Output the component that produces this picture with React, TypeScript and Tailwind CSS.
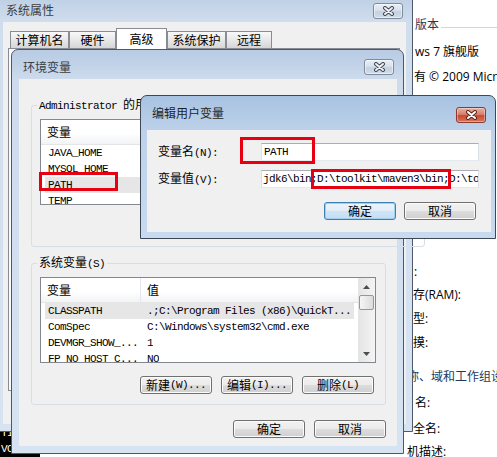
import React from 'react';

const cjk = "font-['Noto_Sans_CJK_SC',sans-serif]";
const mono = "font-['Liberation_Mono','Noto_Sans_CJK_SC',monospace] text-[11px] tracking-[-0.6px]";
const sys = "font-['Open_Sans','Noto_Sans_CJK_SC',sans-serif]";

const M: React.FC<{ children: React.ReactNode }> = ({ children }) => (
  <span className={mono}>{children}</span>
);

const CloseButton: React.FC<{ active?: boolean }> = ({ active = false }) => (
  <div
    className={
      active
        ? 'flex h-[16px] w-[30px] items-center justify-center rounded-[3px] border border-[#8b3a2d] bg-[linear-gradient(#eab0a4,#d8806d_45%,#c44a33_55%,#d7765e)] shadow-[inset_0_0_0_1px_rgba(255,255,255,0.35)]'
        : 'flex h-[16px] w-[30px] items-center justify-center rounded-[3px] border border-[#7d8b9d] bg-[linear-gradient(#e9eff6,#d8e1ec_45%,#c4d1e0_55%,#d2dce8)] shadow-[inset_0_0_0_1px_rgba(255,255,255,0.5)]'
    }
  >
    <svg width="13" height="10" viewBox="0 0 13 10">
      <path d="M3 2L10 8M10 2L3 8" stroke={active ? '#5e2317' : '#3f4957'} strokeWidth="4" strokeLinecap="round" />
      <path d="M3 2L10 8M10 2L3 8" stroke={active ? '#ffffff' : '#eef1f5'} strokeWidth="2" strokeLinecap="round" />
    </svg>
  </div>
);

const Button: React.FC<{ children: React.ReactNode; primary?: boolean }> = ({ children, primary = false }) => (
  <button
    type="button"
    className={
      primary
        ? 'flex h-[18px] w-[72px] items-center justify-center rounded-[3px] border border-[#3c7fb1] bg-[linear-gradient(#edf5fc,#e0edf9_50%,#d0e4f6_50%,#c5ddf2)] text-[12px] leading-[14px] text-black shadow-[inset_0_0_0_1px_#9fd0f0]'
        : 'flex h-[18px] w-[72px] items-center justify-center rounded-[3px] border border-[#707070] bg-[linear-gradient(#f2f2f2,#ebebeb_50%,#dddddd_50%,#cfcfcf)] text-[12px] leading-[14px] text-black shadow-[inset_0_0_0_1px_#fbfbfb]'
    }
  >
    {children}
  </button>
);

const ScrollBar: React.FC = () => (
  <div className="flex w-[17px] shrink-0 flex-col bg-[linear-gradient(90deg,#e4e4e4,#f4f4f4)]">
    <div className="flex h-[17px] items-center justify-center">
      <svg width="7" height="4" viewBox="0 0 7 4">
        <path d="M0 4L3.5 0L7 4Z" fill="#4d4d4d" />
      </svg>
    </div>
    <div className="mx-[1px] h-[15px] rounded-[2px] border border-[#979797] bg-[linear-gradient(90deg,#f6f6f6,#dcdcdc)]" />
    <div className="flex-1" />
    <div className="flex h-[17px] items-center justify-center">
      <svg width="7" height="4" viewBox="0 0 7 4">
        <path d="M0 0L3.5 4L7 0Z" fill="#4d4d4d" />
      </svg>
    </div>
  </div>
);

interface Row {
  name: string;
  value: string;
  selected?: boolean;
}

const ListView: React.FC<{ rows: Row[] }> = ({ rows }) => (
  <div className="ml-[8px] mr-[9px] flex h-[86px] overflow-hidden border border-[#828790] bg-white">
    <div className="flex min-w-0 flex-1 flex-col">
      <div className="flex h-[25px] shrink-0 border-b border-[#e5e5e5] bg-[linear-gradient(#ffffff,#ffffff_55%,#f2f3f5)] text-[12px] leading-[14px]">
        <div className="flex w-[100px] items-center border-r border-[#e3e8ee] pl-[6px]">变量</div>
        <div className="flex items-center pl-[6px]">值</div>
      </div>
      {rows.map((r) => (
        <div
          key={r.name}
          className={
            r.selected
              ? 'mx-[4px] flex h-[16px] shrink-0 items-center whitespace-nowrap bg-[#e6e6e6] leading-[16px]'
              : 'mx-[4px] flex h-[16px] shrink-0 items-center whitespace-nowrap leading-[16px]'
          }
        >
          <div className={`w-[96px] shrink-0 overflow-hidden pl-[3px] ${mono}`}>{r.name}</div>
          <div className={`overflow-hidden pl-[6px] ${mono}`}>{r.value}</div>
        </div>
      ))}
    </div>
    <ScrollBar />
  </div>
);

const GroupBox: React.FC<{ legend: React.ReactNode; rows: Row[]; className?: string }> = ({ legend, rows, className = '' }) => (
  <fieldset className={`rounded-[3px] border border-[#d5dfe5] ${className}`}>
    <legend className="ml-[5px] px-[2px] text-[12px] leading-[14px]">{legend}</legend>
    <div className="flex flex-col pb-[10px] pt-[6px]">
      <ListView rows={rows} />
      <div className="mt-[13px] flex justify-end gap-[9px] pr-[11px]">
        <Button>
          新建<M>(W)...</M>
        </Button>
        <Button>
          编辑<M>(I)...</M>
        </Button>
        <Button>
          删除<M>(L)</M>
        </Button>
      </div>
    </div>
  </fieldset>
);

const tabs = [
  { label: '计算机名', w: 'w-[59px]', selected: false },
  { label: '硬件', w: 'w-[47px]', selected: false },
  { label: '高级', w: 'w-[51px]', selected: true },
  { label: '系统保护', w: 'w-[59px]', selected: false },
  { label: '远程', w: 'w-[46px]', selected: false },
];

const userVars: Row[] = [
  { name: 'JAVA_HOME', value: 'D:\\toolkit\\jdk6' },
  { name: 'MYSQL_HOME', value: 'D:\\toolkit\\mysql' },
  { name: 'PATH', value: 'D:\\toolkit\\jdk6\\bin;D:\\toolkit\\maven3\\bin', selected: true },
  { name: 'TEMP', value: '%USERPROFILE%\\AppData\\Local\\Temp' },
];

const systemVars: Row[] = [
  { name: 'CLASSPATH', value: '.;C:\\Program Files (x86)\\QuickT...', selected: true },
  { name: 'ComSpec', value: 'C:\\Windows\\system32\\cmd.exe' },
  { name: 'DEVMGR_SHOW_...', value: '1' },
  { name: 'FP_NO_HOST_C...', value: 'NO' },
];

export default function App() {
  return (
    <div className={`relative h-[457px] w-[497px] overflow-hidden bg-white text-black ${cjk}`}>
      {/* system panel behind the dialogs */}
      <div className={`absolute left-[413px] top-0 flex w-[84px] flex-col whitespace-nowrap text-[12px] leading-[14px] ${sys}`}>
        <div className="mt-[18px] flex items-center text-[#1e395b]">
          <span className="ml-[2px]">版本</span>
          <div className="ml-[2px] mt-[4px] h-px flex-1 bg-[#cfd6df]" />
        </div>
        <div className="ml-[2px] mt-[13px]">ws 7 旗舰版</div>
        <div className="ml-[1px] mt-[11px]">有 © 2009 Microsoft Corporation</div>
        <div className="ml-[1px] mt-[181px]">:</div>
        <div className="mt-[9px]">存(RAM):</div>
        <div className="mt-[10px]">型:</div>
        <div className="mt-[10px]">摸:</div>
        <div className="ml-[-6px] mt-[20px] text-[#1e395b]">称、域和工作组设置</div>
        <div className="ml-[2px] mt-[12px]">名:</div>
        <div className="mt-[12px]">全名:</div>
        <div className="ml-[-6px] mt-[9px]">机描述:</div>
      </div>

      {/* console window peeking out */}
      <div className={`absolute left-0 top-[420px] h-[37px] w-[40px] bg-black pl-[1px] pt-[5px] leading-[16px] text-white ${mono}`}>
        TITLE
        <br />
        VOL
      </div>

      {/* 系统属性 */}
      <div className="absolute left-[-5px] top-[-8px] flex h-[440px] w-[418px] flex-col rounded-t-[7px] border border-[#50596a] bg-[linear-gradient(#bccde3,#cfdded_28px,#d7e3f1)]">
        <div className="flex h-[29px] shrink-0 items-start justify-between pl-[10px] pr-[9px] pt-[10px]">
          <span className="text-[12px] leading-[14px] text-[#3d3d3d]">系统属性</span>
          <CloseButton />
        </div>
        <div className="mb-[7px] ml-[7px] mr-[6px] flex flex-1 flex-col bg-[#f0f0f0]">
          <div className="flex items-end pl-[7px] pt-[6px]">
            {tabs.map((t) => (
              <div
                key={t.label}
                className={
                  t.selected
                    ? `relative z-10 -mb-px flex h-[21px] items-center justify-center border border-b-0 border-[#898c95] bg-white text-[12px] leading-[14px] ${t.w}`
                    : `flex h-[17px] items-center justify-center border border-b-0 border-[#898c95] bg-[linear-gradient(#f8f8f8,#e8e8e8_50%,#d6d6d6)] text-[12px] leading-[14px] ${t.w}`
                }
              >
                {t.label}
              </div>
            ))}
          </div>
          <div className="mb-[33px] ml-[5px] mr-[6px] flex-1 border border-[#898c95] bg-[#fafafa]" />
        </div>
      </div>

      {/* 环境变量 */}
      <div className="absolute left-[11px] top-[49px] flex h-[405px] w-[393px] flex-col rounded-t-[7px] border border-[#4f5866] bg-[linear-gradient(#b7cbe3,#cddbed_30px,#d6e3f2)]">
        <div className="flex h-[29px] shrink-0 items-start justify-between pl-[11px] pr-[9px] pt-[9px]">
          <span className="mt-[1px] text-[12px] leading-[14px] text-[#3d3d3d]">环境变量</span>
          <CloseButton />
        </div>
        <div className="mb-[7px] ml-[7px] mr-[6px] flex flex-1 flex-col bg-[#f0f0f0] pl-[12px] pr-[11px] pt-[18px]">
          <GroupBox
            legend={
              <>
                <M>Administrator </M>的用户变量<M>(U)</M>
              </>
            }
            rows={userVars}
          />
          <GroupBox
            className="mt-[8px]"
            legend={
              <>
                系统变量<M>(S)</M>
              </>
            }
            rows={systemVars}
          />
          <div className="mt-[15px] flex justify-end gap-[9px]">
            <Button>确定</Button>
            <Button>取消</Button>
          </div>
        </div>
      </div>

      {/* 编辑用户变量 */}
      <div className="absolute left-[140px] top-[95px] flex h-[144px] w-[356px] flex-col rounded-t-[7px] border border-[#3e4756] bg-[linear-gradient(#a7c2e1,#bdd2ea_34px,#c8daef)]">
        <div className="flex h-[34px] shrink-0 items-start justify-between pl-[11px] pr-[9px] pt-[10px]">
          <span className="text-[12px] leading-[14px] text-[#1f1f1f]">编辑用户变量</span>
          <div className="mt-[1px]">
            <CloseButton active />
          </div>
        </div>
        <div className="mb-[6px] ml-[6px] mr-[4px] flex flex-1 flex-col bg-[#f0f0f0] pl-[11px] pr-[12px] pt-[13px]">
          <div className="flex h-[18px] items-center">
            <div className="w-[103px] shrink-0 text-[12px] leading-[14px]">
              变量名<M>(N):</M>
            </div>
            <div className={`h-[18px] flex-1 overflow-hidden whitespace-nowrap border border-x-[#dbdfe6] border-b-[#e3e9ef] border-t-[#abadb3] bg-white pl-[2px] leading-[16px] ${mono}`}>
              PATH
            </div>
          </div>
          <div className="mt-[9px] flex h-[18px] items-center">
            <div className="w-[103px] shrink-0 text-[12px] leading-[14px]">
              变量值<M>(V):</M>
            </div>
            <div className={`h-[18px] flex-1 overflow-hidden whitespace-nowrap border border-x-[#dbdfe6] border-b-[#e3e9ef] border-t-[#abadb3] bg-white pl-[1px] leading-[16px] ${mono}`}>
              jdk6\bin;D:\toolkit\maven3\bin;D:\tools\bin
            </div>
          </div>
          <div className="mt-[14px] flex justify-end gap-[8px] pr-[3px]">
            <Button primary>确定</Button>
            <Button>取消</Button>
          </div>
        </div>
      </div>

      {/* red annotation boxes */}
      <div className="absolute left-[39px] top-[172px] h-[19px] w-[79px] border-[3px] border-[#e60012]" />
      <div className="absolute left-[240px] top-[137px] h-[27px] w-[75px] border-[3px] border-[#e60012]" />
      <div className="absolute left-[311px] top-[169px] h-[20px] w-[140px] border-[3px] border-[#e60012]" />
    </div>
  );
}
